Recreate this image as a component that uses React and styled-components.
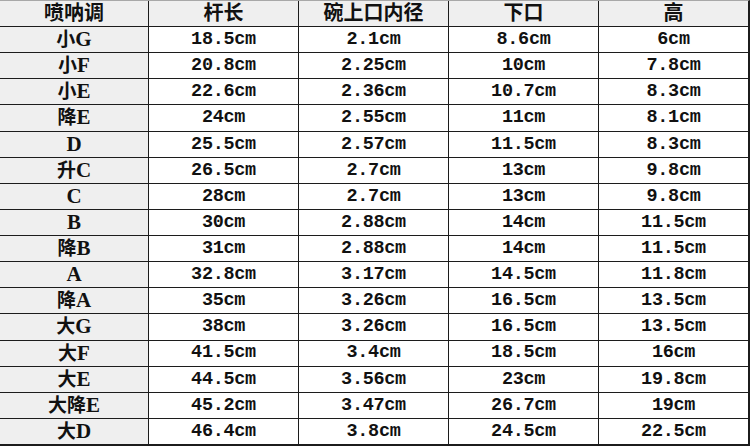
import React from 'react';
import styled, { createGlobalStyle } from 'styled-components';

const GlobalStyle = createGlobalStyle`
  html, body {
    margin: 0;
    padding: 0;
    background: #ffffff;
  }
`;

const Sheet = styled.div`
  width: 750px;
  height: 446px;
  box-sizing: border-box;
  display: grid;
  grid-template-columns: 148px repeat(4, 149px);
  grid-template-rows: repeat(17, minmax(0, 1fr));
  gap: 1px;
  background: #1c1c1c;
  border-top: 1px solid #a8a8a8;
  border-right: 2px solid #1c1c1c;
  border-bottom: 2px solid #1c1c1c;
  overflow: hidden;
`;

const Cell = styled.div`
  display: flex;
  align-items: center;
  justify-content: center;
  min-height: 0;
  line-height: 1.15;
  background: ${p => (p.$shade ? '#efefef' : '#ffffff')};
  color: #111111;
  font-weight: bold;
  white-space: pre;
  font-family: ${p =>
    p.$mono
      ? '"Liberation Mono", "Noto Sans CJK SC", monospace'
      : '"Liberation Serif", "Noto Sans CJK SC", serif'};
  font-size: ${p => (p.$mono ? '18.5px' : '20px')};
  letter-spacing: ${p => (p.$mono ? '-0.3px' : '0')};
`;

const KeyLabel = styled.span`
  display: inline-block;
  line-height: 1.1;
`;

const Han = styled.span`
  display: inline-block;
  line-height: 1;
  font-family: "Noto Sans CJK SC", sans-serif;
  font-size: 19px;
`;

const Latin = styled.span`
  font-family: "Liberation Serif", serif;
  font-size: 21px;
`;

const headers = ['喷呐调', '杆长', '碗上口内径', '下口', '高'];

const rows = [
  ['小G', '18.5cm', '2.1cm', '8.6cm', '6cm'],
  ['小F', '20.8cm', '2.25cm', '10cm', '7.8cm'],
  ['小E', '22.6cm', '2.36cm', '10.7cm', '8.3cm'],
  ['降E', '24cm', '2.55cm', '11cm', '8.1cm'],
  ['D', '25.5cm', '2.57cm', '11.5cm', '8.3cm'],
  ['升C', '26.5cm', '2.7cm', '13cm', '9.8cm'],
  ['C', '28cm', '2.7cm', '13cm', '9.8cm'],
  ['B', '30cm', '2.88cm', '14cm', '11.5cm'],
  ['降B', '31cm', '2.88cm', '14cm', '11.5cm'],
  ['A', '32.8cm', '3.17cm', '14.5cm', '11.8cm'],
  ['降A', '35cm', '3.26cm', '16.5cm', '13.5cm'],
  ['大G', '38cm', '3.26cm', '16.5cm', '13.5cm'],
  ['大F', '41.5cm', '3.4cm', '18.5cm', '16cm'],
  ['大E', '44.5cm', '3.56cm', '23cm', '19.8cm'],
  ['大降E', '45.2cm', '3.47cm', '26.7cm', '19cm'],
  ['大D', '46.4cm', '3.8cm', '24.5cm', '22.5cm'],
];

// split a key name like "大降E" into its Chinese prefix and the Latin note
const KeyName = ({ name }) => {
  const han = name.slice(0, -1);
  const note = name.slice(-1);
  return (
    <KeyLabel>
      {han && <Han>{han}</Han>}
      <Latin>{note}</Latin>
    </KeyLabel>
  );
};

export default function App() {
  return (
    <>
      <GlobalStyle />
      <Sheet>
        {headers.map(h => (
          <Cell key={h} $shade>{h}</Cell>
        ))}
        {rows.map(r =>
          r.map((v, i) => (
            <Cell key={r[0] + i} $shade={i === 0} $mono={i > 0}>
              {i === 0 ? <KeyName name={v} /> : v}
            </Cell>
          ))
        )}
      </Sheet>
    </>
  );
}
